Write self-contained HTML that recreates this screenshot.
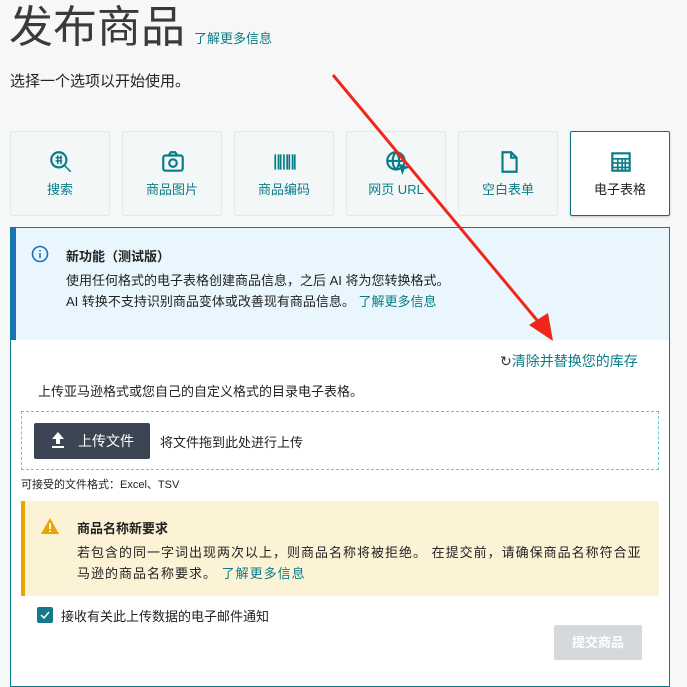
<!DOCTYPE html>
<html><head><meta charset="utf-8"><style>
*{margin:0;padding:0;box-sizing:border-box}
body{width:687px;height:674px;overflow:hidden;background:#f6f8f8;font-family:"Liberation Sans","Noto Sans CJK SC",sans-serif;color:#0f1111;position:relative}
.a{position:absolute}
.t{color:#0b7c86}
.tile{position:absolute;top:131px;width:100px;height:85px;border:1px solid #e3e9ea;background:#f4f7f7;border-radius:2px;text-align:center;font-size:13px;color:#077d89}
.tile svg{position:absolute;left:37px;top:17px}
.tile span{position:absolute;left:0;right:0;top:47px}
</style></head><body>
<div class="a" style="left:9px;top:0px;font-size:44px;color:#3a3a3a;line-height:56px">发布商品</div>
<div class="a t" style="left:194px;top:28px;font-size:13px">了解更多信息</div>
<div class="a" style="left:10px;top:70px;font-size:15px;color:#222">选择一个选项以开始使用。</div>

<div class="tile" style="left:10px"><svg width="26" height="26" viewBox="0 0 24 24" fill="none" stroke="#077d89" stroke-width="2"><circle cx="10" cy="10" r="7"/><path d="M15 15l6 6M7 8h6M7 11h6M9 6v8M12 6v8" stroke-width="1.4"/></svg><span>搜索</span></div>
<div class="tile" style="left:122px"><svg width="26" height="26" viewBox="0 0 24 24" fill="none" stroke="#077d89" stroke-width="2"><rect x="3" y="6" width="18" height="14" rx="2"/><path d="M8 6l2-3h4l2 3"/><circle cx="12" cy="13" r="3.5"/></svg><span>商品图片</span></div>
<div class="tile" style="left:234px"><svg width="26" height="26" viewBox="0 0 24 24" stroke="#077d89"><path d="M3 5v14M6 5v14M8 5v14M11 5v14M14 5v14M16 5v14M19 5v14M21 5v14" stroke-width="1.6"/></svg><span>商品编码</span></div>
<div class="tile" style="left:346px"><svg width="26" height="26" viewBox="0 0 24 24" fill="none" stroke="#077d89" stroke-width="2"><circle cx="11" cy="11" r="8"/><path d="M3 11h16M11 3c-4 4-4 12 0 16M11 3c4 4 4 12 0 16"/><path d="M15 15l6 2-3 1-1 3z" fill="#077d89"/></svg><span>网页 URL</span></div>
<div class="tile" style="left:458px"><svg width="26" height="26" viewBox="0 0 24 24" fill="none" stroke="#077d89" stroke-width="2"><path d="M6 3h8l5 5v13H6z M14 3v5h5"/></svg><span>空白表单</span></div>
<div class="tile" style="left:570px;background:#fff;border-color:#0b6f7c;box-shadow:0 1px 2px rgba(0,0,0,.2)"><svg width="26" height="26" viewBox="0 0 24 24" fill="none" stroke="#077d89" stroke-width="2"><rect x="4" y="4" width="16" height="16"/><path d="M4 9h16M4 13h16M4 17h16M9 9v11M13 9v11M16 9v11" stroke-width="1.5"/></svg><span style="color:#222">电子表格</span></div>

<div class="a" style="left:10px;top:227px;width:660px;height:460px;border:1px solid #0b7c8a;background:#fff"></div>
<div class="a" style="left:11px;top:228px;width:658px;height:112px;background:#e9f6fd;border-left:5px solid #1a72bd"></div>
<svg class="a" style="left:31px;top:245px" width="18" height="18" viewBox="0 0 18 18" fill="none" stroke="#1a72bd" stroke-width="1.6"><circle cx="9" cy="9" r="7.5"/><path d="M9 8v5M9 5v1.5"/></svg>
<div class="a" style="left:66px;top:246px;font-size:13px;font-weight:bold;color:#222">新功能（测试版）</div>
<div class="a" style="left:66px;top:270px;font-size:13px;line-height:21px;color:#222">使用任何格式的电子表格创建商品信息，之后 AI 将为您转换格式。<br>AI 转换不支持识别商品变体或改善现有商品信息。 <span class="t">了解更多信息</span></div>

<div class="a t" style="left:500px;top:351px;font-size:14px"><span style="color:#333">↻</span>清除并替换您的库存</div>
<div class="a" style="left:38px;top:381px;font-size:13px;color:#222">上传亚马逊格式或您自己的自定义格式的目录电子表格。</div>
<div class="a" style="left:21px;top:411px;width:638px;height:59px;border:1px dashed #6cc3cc"></div>
<div class="a" style="left:34px;top:423px;width:116px;height:36px;background:#3b4553;border-radius:2px;color:#fff;font-size:14px;line-height:36px;padding-left:44px">上传文件</div>
<svg class="a" style="left:51px;top:431px" width="14" height="18" viewBox="0 0 14 18" fill="#fff"><path d="M7 1L1 8h4v5h4V8h4z"/><rect x="1" y="15" width="12" height="2"/></svg>
<div class="a" style="left:160px;top:432px;font-size:13px;color:#222">将文件拖到此处进行上传</div>
<div class="a" style="left:21px;top:476px;font-size:11px;color:#222">可接受的文件格式：Excel、TSV</div>

<div class="a" style="left:21px;top:501px;width:638px;height:95px;background:#fcf3d6;border-left:4px solid #e8a700"></div>
<svg class="a" style="left:41px;top:518px" width="18" height="16" viewBox="0 0 18 16"><path d="M9 0L18 16H0z" fill="#e8a700"/><path d="M9 5v6M9 12.5v1.5" stroke="#fff" stroke-width="1.8"/></svg>
<div class="a" style="left:77px;top:518px;font-size:13px;font-weight:bold;color:#222">商品名称新要求</div>
<div class="a" style="left:77px;top:542px;font-size:13px;line-height:21px;color:#222;white-space:nowrap;letter-spacing:1px">若包含的同一字词出现两次以上，则商品名称将被拒绝。 在提交前，请确保商品名称符合亚<br>马逊的商品名称要求。 <span class="t">了解更多信息</span></div>

<div class="a" style="left:37px;top:607px;width:16px;height:16px;background:#16798a;border-radius:2px"></div>
<svg class="a" style="left:37px;top:607px" width="16" height="16"><path d="M4 8l3 3 5-6" stroke="#fff" stroke-width="1.5" fill="none"/></svg>
<div class="a" style="left:61px;top:606px;font-size:13px;color:#222">接收有关此上传数据的电子邮件通知</div>
<div class="a" style="left:554px;top:625px;width:88px;height:35px;background:#d5d9dc;border-radius:2px;color:#fff;font-size:13px;font-weight:bold;text-align:center;line-height:35px">提交商品</div>

<svg class="a" style="left:0;top:0" width="687" height="674"><path d="M333 75L541 325" stroke="#f0261b" stroke-width="3"/><path d="M553 341L529 325L548 313z" fill="#f0261b"/></svg>
</body></html>
